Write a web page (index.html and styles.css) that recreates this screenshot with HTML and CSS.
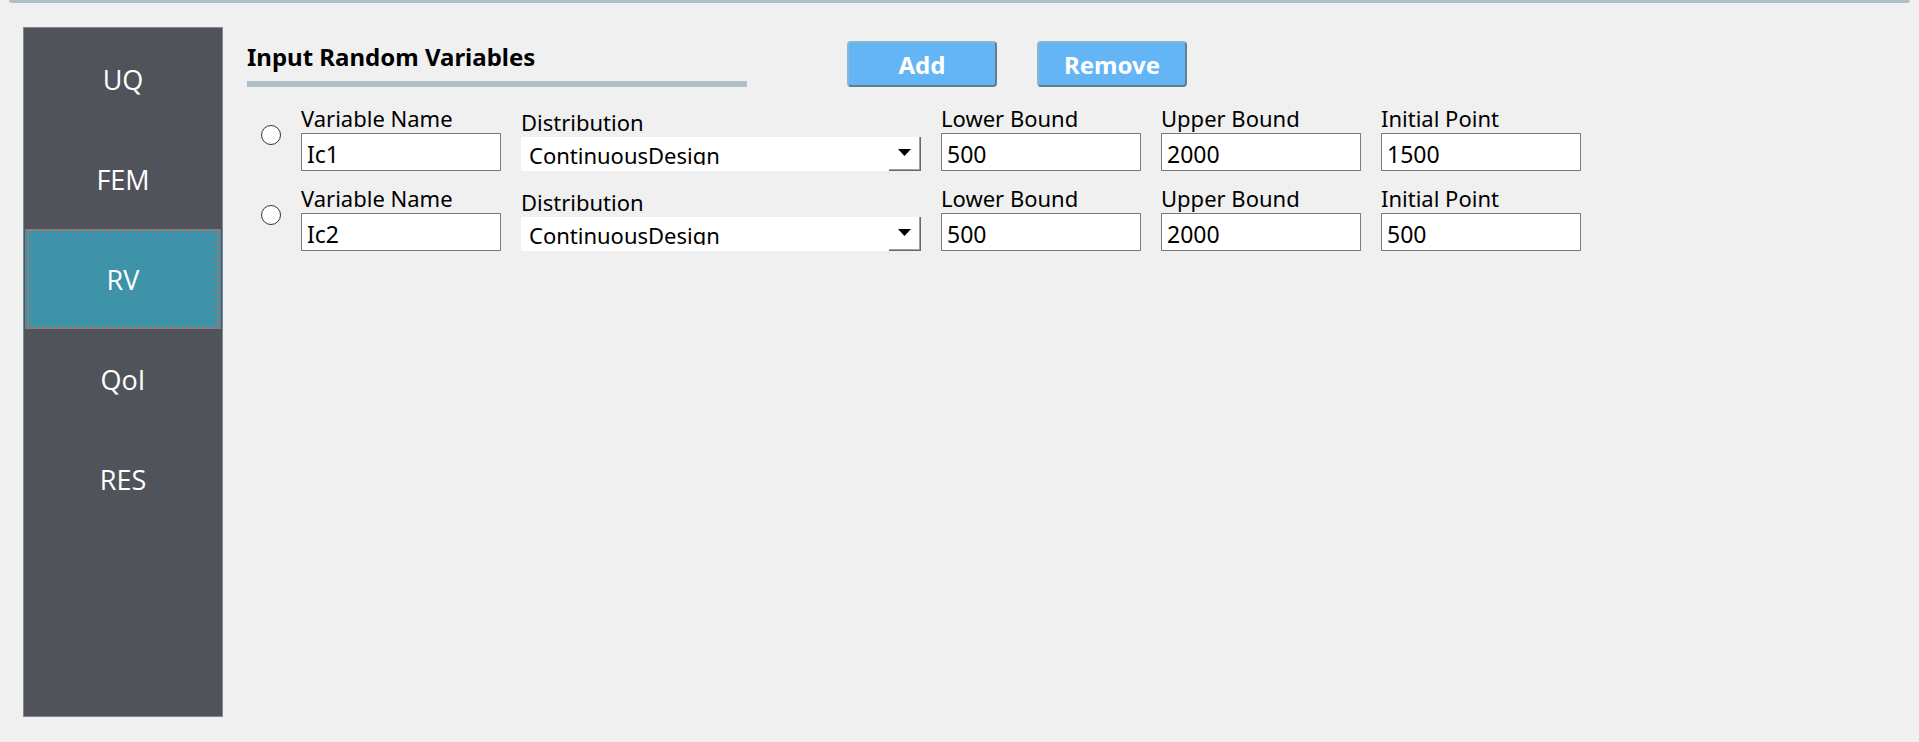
FILE: index.html
```html
<!DOCTYPE html>
<html lang="en">
<head>
<meta charset="utf-8">
<title>Input Random Variables</title>
<link rel="stylesheet" href="styles.css">
</head>
<body>
<div class="top-frame"></div>
<div class="workspace">
  <nav class="sidebar">
    <button type="button" class="nav-item">UQ</button>
    <button type="button" class="nav-item">FEM</button>
    <button type="button" class="nav-item selected" aria-current="page">RV</button>
    <button type="button" class="nav-item">QoI</button>
    <button type="button" class="nav-item">RES</button>
  </nav>
  <main class="panel">
    <header class="panel-header">
      <h1 class="title">Input Random Variables</h1>
      <div class="actions">
        <button type="button" class="action">Add</button>
        <button type="button" class="action">Remove</button>
      </div>
    </header>
    <form class="variables">
      <div class="variable">
        <input class="pick" type="radio" name="variable" aria-label="Select Ic1">
        <div class="field"><label class="label" for="name1">Variable Name</label><input id="name1" class="text" type="text" value="Ic1"></div>
        <div class="field wide">
          <label class="label" for="dist1">Distribution</label>
          <div class="combo">
            <select id="dist1" class="select"><option>ContinuousDesign</option></select>
            <span class="drop"><svg width="13" height="7" viewBox="0 0 13 7"><path d="M0 0H13L6.500 7Z"/></svg></span>
          </div>
        </div>
        <div class="field"><label class="label" for="low1">Lower Bound</label><input id="low1" class="text" type="text" value="500"></div>
        <div class="field"><label class="label" for="up1">Upper Bound</label><input id="up1" class="text" type="text" value="2000"></div>
        <div class="field"><label class="label" for="init1">Initial Point</label><input id="init1" class="text" type="text" value="1500"></div>
      </div>
      <div class="variable">
        <input class="pick" type="radio" name="variable" aria-label="Select Ic2">
        <div class="field"><label class="label" for="name2">Variable Name</label><input id="name2" class="text" type="text" value="Ic2"></div>
        <div class="field wide">
          <label class="label" for="dist2">Distribution</label>
          <div class="combo">
            <select id="dist2" class="select"><option>ContinuousDesign</option></select>
            <span class="drop"><svg width="13" height="7" viewBox="0 0 13 7"><path d="M0 0H13L6.500 7Z"/></svg></span>
          </div>
        </div>
        <div class="field"><label class="label" for="low2">Lower Bound</label><input id="low2" class="text" type="text" value="500"></div>
        <div class="field"><label class="label" for="up2">Upper Bound</label><input id="up2" class="text" type="text" value="2000"></div>
        <div class="field"><label class="label" for="init2">Initial Point</label><input id="init2" class="text" type="text" value="500"></div>
      </div>
    </form>
  </main>
</div>
</body>
</html>
```
FILE: styles.css
```css
* {
  box-sizing: border-box;
}

body {
  margin: 0;
  min-height: 100vh;
  display: flex;
  flex-direction: column;
  background: #f0f0f0;
  color: #000;
  font: 23px/28px "Noto Sans", "Open Sans", sans-serif;
}

button,
input,
select {
  font: inherit;
  color: inherit;
  margin: 0;
}

.top-frame {
  height: 3px;
  margin: 0 9px;
  background: #b0bec5;
  border-radius: 0 0 3px 3px;
}

.workspace {
  flex: 1;
  display: flex;
  gap: 24px;
  padding: 24px 23px 25px;
}

.sidebar {
  flex: none;
  width: 200px;
  display: flex;
  flex-direction: column;
  padding: 1px 3px;
  background: #50535a;
  border: 1px solid #828790;
}

.nav-item {
  height: 100px;
  padding: 2px 0 0;
  border: 0;
  background: none;
  color: #fff;
  font: 27px/36px "Open Sans", "Noto Sans", sans-serif;
}

.nav-item.selected {
  background: #3f93a9;
  box-shadow: -2px 0 #3f93a9, 2px 0 #3f93a9;
  outline: 2px dotted #d0674f;
  outline-offset: -2px;
}

.panel {
  flex: 1;
  padding-top: 14px;
}

.panel-header {
  display: flex;
  gap: 100px;
}

.title {
  width: 500px;
  height: 46px;
  margin: 0;
  border-bottom: 6px solid #b0bec5;
  font-size: 24px;
  line-height: 32px;
  font-weight: 700;
}

.actions {
  display: flex;
  gap: 40px;
}

.action {
  width: 150px;
  height: 46px;
  padding: 2px 0 0;
  background: #64b5f6;
  border: 2px solid;
  border-color: #88b8cc #5f7f8f #5f7f8f #88b8cc;
  border-radius: 4px;
  color: #fff;
  font-size: 24px;
  font-weight: 700;
}

.variables {
  display: flex;
  flex-direction: column;
  gap: 14px;
  padding: 18px 0 0 14px;
}

.variable {
  display: flex;
  align-items: flex-end;
  gap: 20px;
}

.pick {
  appearance: none;
  width: 20px;
  height: 20px;
  margin-bottom: 26px;
  background: #fff;
  border: 1px solid #333;
  border-radius: 50%;
}

.pick:checked {
  box-shadow: inset 0 0 0 4px #fff;
  background: #333;
}

.field {
  width: 200px;
  display: flex;
  flex-direction: column;
}

.wide {
  width: 400px;
}

.label {
  padding-bottom: 2px;
  font-size: 22px;
  line-height: 26px;
}

.text {
  width: 100%;
  height: 38px;
  padding: 4px 5px 0;
  background: #fff;
  border: 1px solid #7a7a7a;
  border-radius: 0;
}

.combo {
  position: relative;
  display: flex;
}

.select {
  appearance: none;
  width: 100%;
  height: 34px;
  padding: 4px 36px 6px 8px;
  background: #fff;
  border: 0;
  border-radius: 0;
  font-size: 22px;
  line-height: 28px;
}

.drop {
  position: absolute;
  top: 0;
  right: 0;
  bottom: 0;
  width: 32px;
  display: flex;
  align-items: center;
  justify-content: center;
  padding-bottom: 2px;
  border: solid #696969;
  border-width: 0 1px 1px 0;
  box-shadow: inset -1px -1px #a0a0a0;
  pointer-events: none;
}
```
